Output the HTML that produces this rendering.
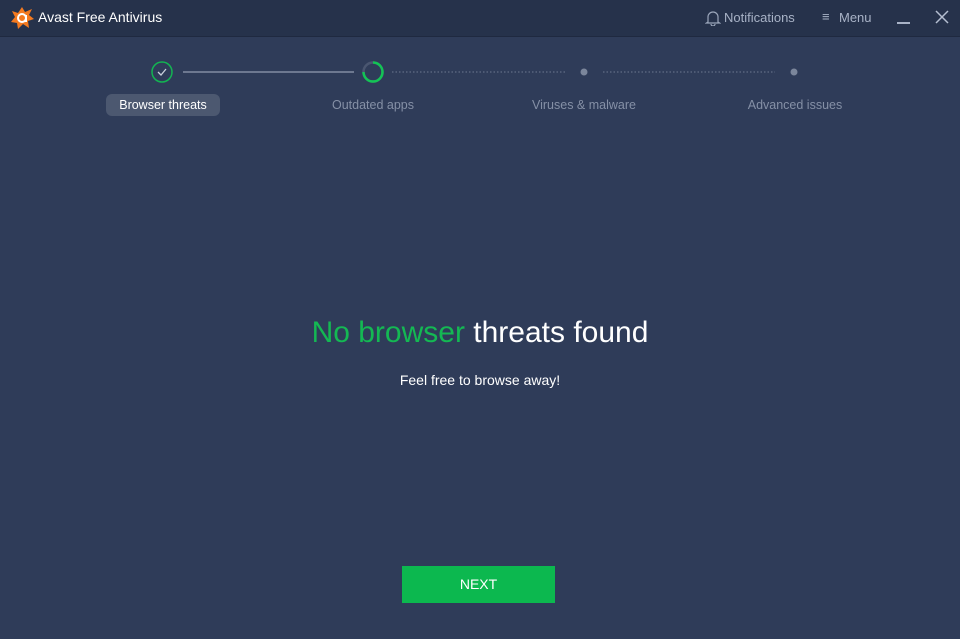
<!DOCTYPE html>
<html><head><style>
*{margin:0;padding:0;box-sizing:border-box}
body{width:960px;height:639px;background:#2f3c59;font-family:"Liberation Sans",sans-serif;position:relative;overflow:hidden}
.top{position:absolute;left:0;top:0;width:960px;height:37px;background:#26324b;border-bottom:1px solid #1f2940}
.t{position:absolute;color:#fff;font-size:14px}
.lbl{position:absolute;top:98px;font-size:12.5px;color:#8590a6;transform:translateX(-50%);white-space:nowrap}
</style></head><body>
<div class="top">
<svg style="position:absolute;left:9px;top:5px" width="26" height="26" viewBox="0 0 26 26">
<path d="M13 2 L16 7 L23 4 L20 10 L25 14 L19 16 L20 23 L14 19 L9 24 L8 18 L2 17 L6 12 L3 6 L9 8 Z" fill="#f47a20"/>
<circle cx="13" cy="13" r="4" fill="none" stroke="#fff" stroke-width="2"/><path d="M17 10 V17" stroke="#fff" stroke-width="2"/>
</svg>
<div class="t" style="left:38px;top:9px">Avast Free Antivirus</div>
<svg style="position:absolute;left:705px;top:9px" width="16" height="17" viewBox="0 0 16 17"><path d="M3 13 V8 a5 5 0 0 1 10 0 V13 L14.5 14 H1.5 Z M6 15 a2 2 0 0 0 4 0" fill="none" stroke="#9aa5ba" stroke-width="1.2"/></svg>
<div class="t" style="left:724px;top:10px;font-size:13px;color:#a8b2c6">Notifications</div>
<div class="t" style="left:822px;top:9px;font-size:13px;color:#a8b2c6">≡</div>
<div class="t" style="left:839px;top:10px;font-size:13px;color:#a8b2c6">Menu</div>
<div style="position:absolute;left:897px;top:22px;width:13px;height:1.5px;background:#a8b2c6"></div>
<svg style="position:absolute;left:935px;top:10px" width="14" height="14"><path d="M1 1L13 13M13 1L1 13" stroke="#b5bed0" stroke-width="1.5"/></svg>
</div>
<svg style="position:absolute;left:0;top:55px" width="960" height="35">
<circle cx="162" cy="17" r="10" fill="none" stroke="#13b452" stroke-width="1.5"/>
<path d="M158 17 L161 20 L166 14" fill="none" stroke="#c9d0dc" stroke-width="1.3"/>
<line x1="183" y1="17" x2="354" y2="17" stroke="#6d7890" stroke-width="2"/>
<circle cx="373" cy="17" r="9.5" fill="none" stroke="#4a5670" stroke-width="2.5"/>
<path d="M373 7.5 A9.5 9.5 0 1 1 363.5 17" fill="none" stroke="#13c455" stroke-width="2.5"/>
<line x1="392" y1="17" x2="565" y2="17" stroke="#6d7890" stroke-width="1" stroke-dasharray="1.5 2"/>
<circle cx="584" cy="17" r="3.5" fill="#7b869b"/>
<line x1="603" y1="17" x2="775" y2="17" stroke="#6d7890" stroke-width="1" stroke-dasharray="1.5 2"/>
<circle cx="794" cy="17" r="3.5" fill="#7b869b"/>
</svg>
<div style="position:absolute;left:106px;top:94px;width:114px;height:22px;border-radius:6px;background:#4c5870"></div>
<div class="lbl" style="left:163px;color:#fff">Browser threats</div>
<div class="lbl" style="left:373px">Outdated apps</div>
<div class="lbl" style="left:584px">Viruses &amp; malware</div>
<div class="lbl" style="left:795px">Advanced issues</div>
<div style="position:absolute;left:0;width:960px;top:316px;text-align:center;font-size:30px;color:#fff"><span style="color:#14b853">No browser</span> threats found</div>
<div style="position:absolute;left:0;width:960px;top:372px;text-align:center;font-size:14px;color:#fff">Feel free to browse away!</div>
<div style="position:absolute;left:402px;top:566px;width:153px;height:37px;background:#0cb84f;color:#fff;font-size:14px;text-align:center;line-height:37px">NEXT</div>
</body></html>
